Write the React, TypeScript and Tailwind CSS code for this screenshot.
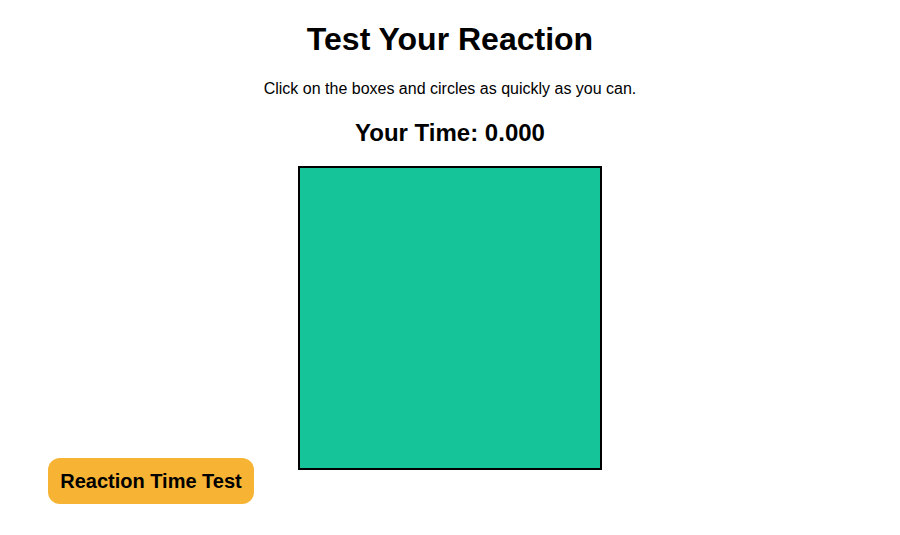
export default function App() {
  return (
    <div className="min-h-[535px] bg-white text-center font-['Liberation_Sans',Arial,sans-serif] text-black">
      <div className="pt-[21px]">
        <h1 className="text-[32px] font-bold leading-[37px]">Test Your Reaction</h1>
        <p className="mt-[22px] text-base leading-[18px]">
          Click on the boxes and circles as quickly as you can.
        </p>
        <h2 className="mt-[21px] text-2xl font-bold leading-[28px]">Your Time: 0.000</h2>
        <div className="mx-auto mt-[19px] h-[304px] w-[304px] border-2 border-black bg-[#16c49a]" />
      </div>
      <button className="fixed bottom-[31px] left-12 h-[46px] w-[206px] rounded-xl bg-[#f7b434] text-xl font-bold text-black">
        Reaction Time Test
      </button>
    </div>
  );
}
